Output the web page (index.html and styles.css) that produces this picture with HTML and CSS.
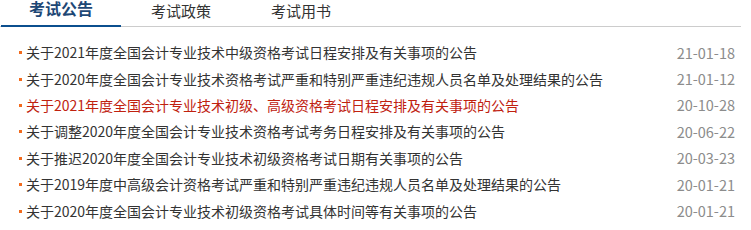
FILE: index.html
```html
<!DOCTYPE html>
<html lang="zh-CN">
<head>
<meta charset="utf-8">
<title>考试公告</title>
<link rel="stylesheet" href="styles.css">
</head>
<body>
<div class="panel">
  <div class="tabs">
    <div class="tab active">考试公告</div>
    <div class="tab">考试政策</div>
    <div class="tab">考试用书</div>
  </div>
  <ul class="list">
    <li class="item"><span class="title">关于2021年度全国会计专业技术中级资格考试日程安排及有关事项的公告</span><span class="date">21-01-18</span></li>
    <li class="item"><span class="title">关于2020年度全国会计专业技术资格考试严重和特别严重违纪违规人员名单及处理结果的公告</span><span class="date">21-01-12</span></li>
    <li class="item hot"><span class="title">关于2021年度全国会计专业技术初级、高级资格考试日程安排及有关事项的公告</span><span class="date">20-10-28</span></li>
    <li class="item"><span class="title">关于调整2020年度全国会计专业技术资格考试考务日程安排及有关事项的公告</span><span class="date">20-06-22</span></li>
    <li class="item"><span class="title">关于推迟2020年度全国会计专业技术初级资格考试日期有关事项的公告</span><span class="date">20-03-23</span></li>
    <li class="item"><span class="title">关于2019年度中高级会计资格考试严重和特别严重违纪违规人员名单及处理结果的公告</span><span class="date">20-01-21</span></li>
    <li class="item"><span class="title">关于2020年度全国会计专业技术初级资格考试具体时间等有关事项的公告</span><span class="date">20-01-21</span></li>
  </ul>
</div>
</body>
</html>
```

FILE: styles.css
```css
* { box-sizing: border-box; }
html, body { margin: 0; padding: 0; background: #fff; }
body {
  font-family: "Noto Sans CJK SC", "Microsoft YaHei", sans-serif;
  color: #333;
  overflow: hidden;
}
.panel {
  width: 741px;
  margin-top: -3px;
}
.tabs {
  display: flex;
  height: 30px;
  border-bottom: 1px solid #cccccc;
  align-items: flex-end;
}
.tab {
  width: 120px;
  text-align: center;
  font-size: 15px;
  line-height: 30px;
  height: 30px;
  color: #333;
}
.tab.active {
  margin-left: 1px;
  font-size: 16px;
  font-weight: bold;
  color: #1d4775;
  line-height: 24px;
  border-bottom: 2px solid #0b4f8e;
  margin-bottom: -1px;
  height: 31px;
  text-align: left;
  padding-left: 28px;
}
.list {
  list-style: none;
  margin: 12px 0 0 0;
  padding: 0 6px 0 19px;
}
.item {
  display: flex;
  justify-content: space-between;
  align-items: center;
  height: 26.4px;
  font-size: 14px;
}
.title {
  position: relative;
  padding-left: 7px;
  color: #333;
}
.title::before {
  content: "";
  position: absolute;
  left: 0;
  top: 50%;
  width: 3px;
  height: 3px;
  margin-top: -1px;
  background: #f26b1d;
}
.hot .title { color: #c0210f; }
.date {
  color: #8c8c8c;
  font-size: 14.5px;
}
```
